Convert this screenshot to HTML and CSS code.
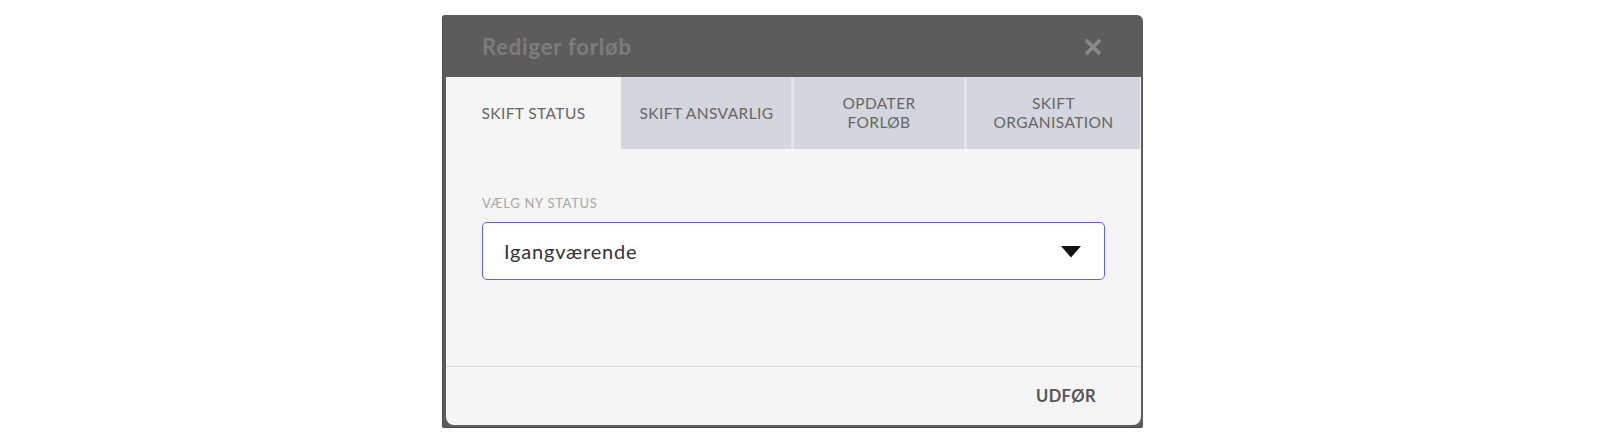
FILE: index.html
```html
<!DOCTYPE html>
<html lang="da">
<head>
<meta charset="utf-8">
<title>Rediger forløb</title>
<link rel="stylesheet" href="styles.css">
</head>
<body>
<div class="frame">
  <div class="header">
    <span class="title">Rediger forløb</span>
    <svg class="close" width="20" height="20" viewBox="0 0 20 20" aria-hidden="true">
      <path d="M3 3 L17 17 M17 3 L3 17" stroke="#8a8a8a" stroke-width="3.4" stroke-linecap="butt"/>
    </svg>
  </div>
  <div class="panel">
    <div class="tabs">
      <div class="tab tab-active">SKIFT STATUS</div>
      <div class="tab tab-2">SKIFT ANSVARLIG</div>
      <div class="tab tab-3">OPDATER<br>FORLØB</div>
      <div class="tab tab-4">SKIFT<br>ORGANISATION</div>
    </div>
    <div class="content">
      <div class="label">VÆLG NY STATUS</div>
      <div class="select">
        <span class="value">Igangværende</span>
        <svg class="caret" width="20" height="12" viewBox="0 0 20 12" aria-hidden="true">
          <path d="M0 0 H20 L10 11.5 Z" fill="#111"/>
        </svg>
      </div>
    </div>
    <div class="footer">
      <span class="action">UDFØR</span>
    </div>
  </div>
</div>
</body>
</html>
```

FILE: styles.css
```css
html, body {
  margin: 0;
  padding: 0;
  background: #ffffff;
}

body {
  font-family: Lato, "Noto Sans", "Liberation Sans", sans-serif;
  height: 448px;
  overflow: hidden;
}

.frame {
  margin: 15px 0 0 442px;
  width: 701px;
  height: 413px;
  box-sizing: border-box;
  background: #5c5c5c;
  border-left: 1px solid #4c4c4c;
  border-bottom: 1px solid #4a4a4a;
  border-radius: 3px 6px 2px 2px;
  padding: 0 2px 2px 3px;
  display: flex;
  flex-direction: column;
}

.header {
  height: 62px;
  flex: none;
  display: flex;
  align-items: center;
  justify-content: space-between;
  padding: 0 38px 0 36px;
}

.title {
  font-size: 22px;
  font-weight: 700;
  color: #7c7c7c;
  letter-spacing: 0.8px;
}

.close {
  display: block;
  margin-top: 1px;
}

.panel {
  flex: 1;
  background: #f5f5f5;
  border-radius: 0 0 8px 8px;
  display: flex;
  flex-direction: column;
}

.tabs {
  height: 72px;
  flex: none;
  display: flex;
}

.tab {
  display: flex;
  align-items: center;
  justify-content: center;
  text-align: center;
  font-size: 15.5px;
  letter-spacing: 0.4px;
  line-height: 19px;
  color: #666666;
  background: #d3d6dd;
  box-sizing: border-box;
}

.tab-active {
  width: 175px;
  background: #f5f5f5;
}

.tab-2 {
  width: 173px;
  border-right: 3px solid #e4e5ea;
  padding-left: 1px;
}

.tab-3 {
  width: 173px;
  border-right: 3px solid #e4e5ea;
}

.tab-4 {
  width: 173px;
}

.content {
  flex: 1;
  padding: 46px 36px 0 36px;
  border-bottom: 1px solid #dddddd;
}

.label {
  font-size: 13px;
  color: #a6a6a6;
  line-height: 16px;
  letter-spacing: 0.7px;
}

.select {
  margin-top: 11px;
  height: 58px;
  box-sizing: border-box;
  background: #ffffff;
  border: 1.5px solid #5b63f0;
  border-radius: 5px;
  display: flex;
  align-items: center;
  justify-content: space-between;
  padding: 0 23px 0 21px;
}

.value {
  font-size: 20px;
  letter-spacing: 0.8px;
  color: #333333;
}

.caret {
  display: block;
  margin-top: 1px;
}

.footer {
  height: 58px;
  flex: none;
  display: flex;
  align-items: center;
  justify-content: flex-end;
  padding: 0 45px 0 0;
}

.action {
  font-size: 16.5px;
  font-weight: 700;
  color: #555555;
  letter-spacing: 0.4px;
}
```
